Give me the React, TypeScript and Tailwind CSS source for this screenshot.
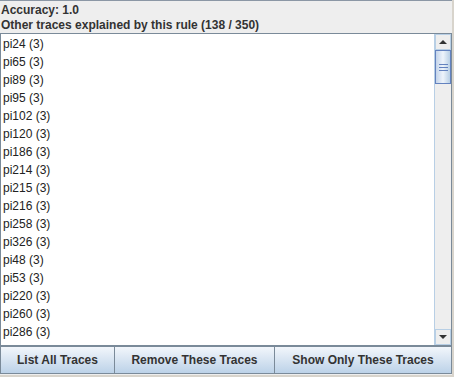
const rows = [
  "pi24 (3)",
  "pi65 (3)",
  "pi89 (3)",
  "pi95 (3)",
  "pi102 (3)",
  "pi120 (3)",
  "pi186 (3)",
  "pi214 (3)",
  "pi215 (3)",
  "pi216 (3)",
  "pi258 (3)",
  "pi326 (3)",
  "pi48 (3)",
  "pi53 (3)",
  "pi220 (3)",
  "pi260 (3)",
  "pi286 (3)",
  "pi306 (3)",
];

function ScrollBar() {
  return (
    <div className="flex w-[17px] flex-col border-l border-[#b8cfe5] bg-[#eeeeee]">
      <div className="flex h-[16px] items-center justify-center border border-[#b8cfe5] bg-[#eeeeee]">
        <div className="h-0 w-0 border-x-[4px] border-b-[4px] border-x-transparent border-b-[#333]" />
      </div>
      <div className="flex h-[34px] flex-col items-center justify-center gap-[2px] border border-[#6382bf] bg-gradient-to-r from-[#c4d4ea] via-[#eef4fb] to-[#b8cfe5]">
        <div className="h-px w-[9px] bg-[#6382bf]" />
        <div className="h-px w-[9px] bg-[#6382bf]" />
        <div className="h-px w-[9px] bg-[#6382bf]" />
      </div>
      <div className="flex-1" />
      <div className="flex h-[16px] items-center justify-center border border-[#b8cfe5] bg-[#eeeeee]">
        <div className="h-0 w-0 border-x-[4px] border-t-[4px] border-x-transparent border-t-[#333]" />
      </div>
    </div>
  );
}

function Btn({ label, className }: { label: string; className: string }) {
  return (
    <button
      className={`flex h-[28px] items-center justify-center border border-[#7a8a99] bg-gradient-to-b from-[#f2f6fb] to-[#bcd2e8] text-[12px] font-bold text-[#333] ${className}`}
    >
      {label}
    </button>
  );
}

export default function App() {
  return (
    <div
      className="h-[377px] w-[454px] bg-[#d8d4cc]"
      style={{ fontFamily: '"Liberation Sans", Arial, sans-serif' }}
    >
      <div className="flex h-[375px] w-[452px] flex-col border-t border-[#8b97a5] bg-[#eeeeee] text-[#333]">
        <div className="h-[16px] pl-px pt-[1px] text-[12px] leading-[16px] font-bold">Accuracy: 1.0</div>
        <div className="h-[16px] pl-px text-[12px] leading-[16px] font-bold">
          Other traces explained by this rule (138 / 350)
        </div>
        <div className="flex h-[313px] border border-[#7a8a99] bg-white">
          <div className="flex-1 overflow-hidden pl-[2px] pt-[1px]">
            {rows.map((r) => (
              <div key={r} className="h-[18px] text-[12px] leading-[18px] text-[#222]">
                {r}
              </div>
            ))}
          </div>
          <ScrollBar />
        </div>
        <div className="flex">
          <Btn label="List All Traces" className="w-[115px]" />
          <Btn label="Remove These Traces" className="w-[160px] border-l-0" />
          <Btn label="Show Only These Traces" className="w-[177px] border-l-0" />
        </div>
      </div>
    </div>
  );
}
